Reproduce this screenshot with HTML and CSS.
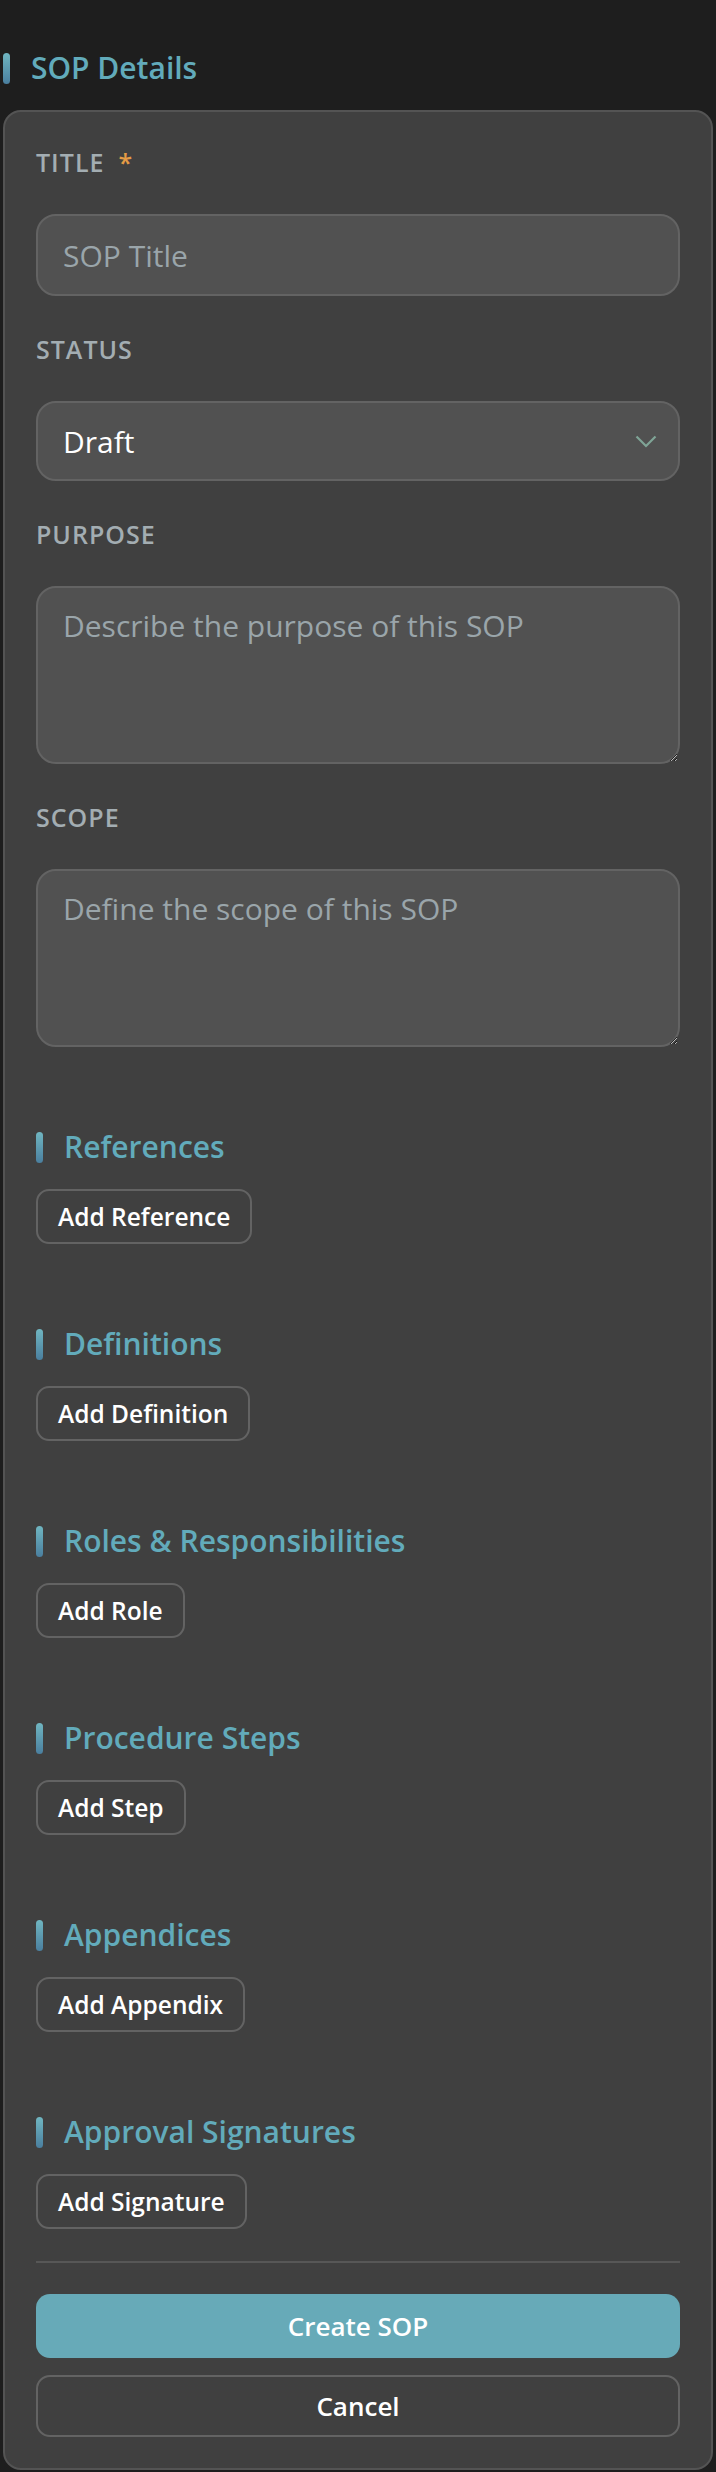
FILE: index.html
```html
<!DOCTYPE html>
<html lang="en">
<head>
  <meta charset="UTF-8" />
  <title>Create SOP</title>
  <link rel="stylesheet" href="styles.css">
</head>
<body>
  <div class="page">
    <h2 class="heading top-heading"><span class="bar"></span>SOP Details</h2>

    <form class="card" id="sopForm">
      <div class="field">
        <label for="title">TITLE<span class="req">*</span></label>
        <input type="text" id="title" placeholder="SOP Title" />
      </div>

      <div class="field">
        <label for="status">STATUS</label>
        <div class="select-wrap">
          <select id="status">
            <option>Draft</option>
            <option>In Review</option>
            <option>Approved</option>
          </select>
          <svg class="chevron" width="22" height="13" viewBox="0 0 22 13">
            <path d="M1.5 1.5 L11 11 L20.5 1.5" fill="none" stroke="currentColor" stroke-width="2.2" />
          </svg>
        </div>
      </div>

      <div class="field">
        <label for="purpose">PURPOSE</label>
        <textarea id="purpose" placeholder="Describe the purpose of this SOP"></textarea>
      </div>

      <div class="field">
        <label for="scope">SCOPE</label>
        <textarea id="scope" placeholder="Define the scope of this SOP"></textarea>
      </div>

      <div class="section">
        <h3 class="heading"><span class="bar"></span>References</h3>
        <button type="button" class="add-btn">Add Reference</button>
      </div>

      <div class="section">
        <h3 class="heading"><span class="bar"></span>Definitions</h3>
        <button type="button" class="add-btn">Add Definition</button>
      </div>

      <div class="section">
        <h3 class="heading"><span class="bar"></span>Roles &amp; Responsibilities</h3>
        <button type="button" class="add-btn">Add Role</button>
      </div>

      <div class="section">
        <h3 class="heading"><span class="bar"></span>Procedure Steps</h3>
        <button type="button" class="add-btn">Add Step</button>
      </div>

      <div class="section">
        <h3 class="heading"><span class="bar"></span>Appendices</h3>
        <button type="button" class="add-btn">Add Appendix</button>
      </div>

      <div class="section">
        <h3 class="heading"><span class="bar"></span>Approval Signatures</h3>
        <button type="button" class="add-btn">Add Signature</button>
      </div>

      <hr class="divider" />

      <div class="actions">
        <button type="submit" class="btn primary">Create SOP</button>
        <button type="button" class="btn secondary">Cancel</button>
      </div>
    </form>
  </div>
</body>
</html>
```

FILE: styles.css
```css
html, body {
  margin: 0;
  padding: 0;
  background-color: #1e1e1e;
}
body {
  font-family: 'Open Sans', 'Noto Sans', sans-serif;
  color: #ffffff;
  color-scheme: dark;
}
.page {
  padding: 50px 3px 2px;
}
.heading {
  display: flex;
  align-items: center;
  margin: 0;
  font-size: 30px;
  line-height: 36px;
  font-weight: 600;
  color: #62abbb;
}
.top-heading {
  margin-bottom: 24px;
}
.bar {
  width: 7px;
  height: 31px;
  border-radius: 3.5px;
  background: linear-gradient(#70b6c1, #4a7f9f);
  margin-right: 21px;
}
.card {
  background-color: #404040;
  border: 2px solid #545454;
  border-radius: 18px;
  padding: 35px 31px 31px;
}
.field {
  margin-bottom: 38px;
}
.field:last-of-type {
  margin-bottom: 0;
}
label {
  display: block;
  font-size: 25px;
  line-height: 30px;
  font-weight: 600;
  letter-spacing: 1px;
  color: #a3adb2;
  margin-bottom: 37px;
}
.req {
  color: #e49b45;
  margin-left: 14px;
}
input, select, textarea {
  display: block;
  width: 100%;
  box-sizing: border-box;
  font-family: inherit;
  font-size: 30px;
  color: #ffffff;
  background-color: #515151;
  border: 2px solid #636363;
  border-radius: 20px;
  outline: none;
}
input {
  height: 82px;
  padding: 0 25px;
}
select {
  height: 80px;
  padding: 0 25px;
  appearance: none;
  -webkit-appearance: none;
}
textarea {
  height: 178px;
  padding: 15px 25px;
  line-height: 45px;
  resize: vertical;
}
::placeholder {
  color: #9aa5aa;
  opacity: 1;
}
.select-wrap {
  position: relative;
}
.chevron {
  position: absolute;
  right: 23px;
  top: 34px;
  color: #7fa496;
  pointer-events: none;
}
.section {
  margin-top: 82px;
}
.section .heading {
  margin-bottom: 24px;
}
.add-btn {
  height: 55px;
  padding: 0 20px;
  font-family: inherit;
  font-size: 24.5px;
  font-weight: 600;
  color: #ffffff;
  background: transparent;
  border: 2px solid #636363;
  border-radius: 13px;
  cursor: pointer;
}
.divider {
  border: none;
  border-top: 2px solid #575757;
  margin: 32px 0 31px;
}
.actions {
  display: flex;
  flex-direction: column;
  gap: 17px;
}
.btn {
  width: 100%;
  font-family: inherit;
  font-size: 26px;
  font-weight: 600;
  color: #ffffff;
  border-radius: 14px;
  cursor: pointer;
}
.primary {
  height: 64px;
  background-color: #67aab8;
  border: none;
}
.secondary {
  height: 62px;
  background: transparent;
  border: 2px solid #636363;
}
```
